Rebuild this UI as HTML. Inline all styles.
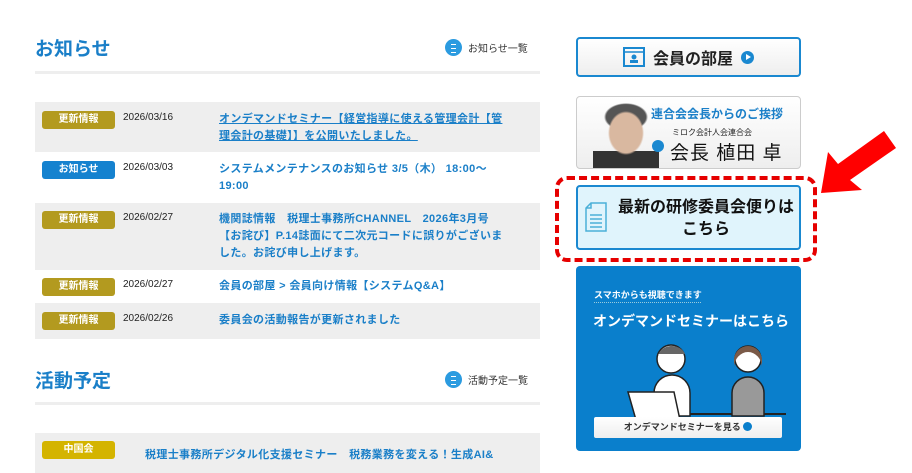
<!DOCTYPE html>
<html><head><meta charset="utf-8"><style>
*{margin:0;padding:0;box-sizing:border-box}
body{width:912px;height:465px;overflow:hidden;background:#fff;font-family:"Liberation Sans","Noto Sans CJK JP",sans-serif;position:relative}
.a{position:absolute}
h2{position:absolute;left:35px;font-size:19px;color:#1a7fc8;font-weight:bold}
.more{position:absolute;left:445px;font-size:10px;color:#333;display:flex;align-items:center;gap:6px}
.more i{width:17px;height:17px;border-radius:50%;background:#2b9be0;display:inline-block;position:relative}
.more i:after{content:"";position:absolute;left:6px;top:5px;width:5px;height:7px;border-top:1px solid #fff;border-bottom:1px solid #fff;background:linear-gradient(#fff,#fff) 0 3px/5px 1px no-repeat}
.line{position:absolute;left:35px;width:505px;height:3px;background:#eee}
.row{position:absolute;left:35px;width:505px}
.g{background:#eee}
.b{position:absolute;left:7px;width:73px;height:18px;border-radius:3px;color:#fff;font-size:10px;font-weight:bold;text-align:center;line-height:18px}
.y{background:#b39a1f}.bl{background:#1582cf}
.d{position:absolute;left:88px;font-size:10px;color:#222}
.t{position:absolute;left:184px;width:288px;font-size:11px;font-weight:bold;color:#1a7fc8;line-height:17px;letter-spacing:.35px}
</style></head><body>
<h2 style="top:34px">お知らせ</h2>
<div class="more" style="top:39px"><i></i>お知らせ一覧</div>
<div class="line" style="top:71px"></div>

<div class="row g" style="top:102px;height:50px"><div class="b y" style="top:9px">更新情報</div><div class="d" style="top:10px">2026/03/16</div><div class="t" style="top:9px;text-decoration:underline">オンデマンドセミナー【経営指導に使える管理会計【管理会計の基礎】】を公開いたしました。</div></div>
<div class="row" style="top:152px;height:51px"><div class="b bl" style="top:9px">お知らせ</div><div class="d" style="top:10px">2026/03/03</div><div class="t" style="top:9px">システムメンテナンスのお知らせ 3/5（木） 18:00〜19:00</div></div>
<div class="row g" style="top:203px;height:67px"><div class="b y" style="top:8px">更新情報</div><div class="d" style="top:9px">2026/02/27</div><div class="t" style="top:8px">機関誌情報　税理士事務所CHANNEL　2026年3月号【お詫び】P.14誌面にて二次元コードに誤りがございました。お詫び申し上げます。</div></div>
<div class="row" style="top:270px;height:33px"><div class="b y" style="top:8px">更新情報</div><div class="d" style="top:9px">2026/02/27</div><div class="t" style="top:8px">会員の部屋 &gt; 会員向け情報【システムQ&amp;A】</div></div>
<div class="row g" style="top:303px;height:36px"><div class="b y" style="top:9px">更新情報</div><div class="d" style="top:10px">2026/02/26</div><div class="t" style="top:9px">委員会の活動報告が更新されました</div></div>

<h2 style="top:366px">活動予定</h2>
<div class="more" style="top:371px"><i></i>活動予定一覧</div>
<div class="line" style="top:402px"></div>
<div class="row g" style="top:433px;height:40px"><div class="b" style="top:8px;background:#d4b400">中国会</div><div class="t" style="top:14px;left:110px;width:400px;white-space:nowrap">税理士事務所デジタル化支援セミナー　税務業務を変える！生成AI&amp;</div></div>

<!-- right -->
<div class="a" style="left:576px;top:37px;width:225px;height:40px;border:2px solid #1a88d0;border-radius:4px;background:linear-gradient(#fff,#eee);display:flex;align-items:center;justify-content:center;gap:8px;font-size:16px;font-weight:bold;color:#222">
<svg width="22" height="20" viewBox="0 0 22 20"><rect x="1" y="1" width="20" height="18" fill="none" stroke="#1a88d0" stroke-width="2"/><line x1="1" y1="5" x2="21" y2="5" stroke="#1a88d0" stroke-width="1.5"/><circle cx="11" cy="10" r="2.5" fill="#1a88d0"/><rect x="7" y="13" width="8" height="3" fill="#1a88d0"/></svg>会員の部屋<span style="width:13px;height:13px;border-radius:50%;background:#1a88d0;display:inline-block;position:relative"><span style="position:absolute;left:5px;top:3.5px;border-left:5px solid #fff;border-top:3px solid transparent;border-bottom:3px solid transparent"></span></span></div>

<div class="a" style="left:576px;top:96px;width:225px;height:73px;border:1px solid #ccc;border-radius:4px;background:linear-gradient(#fff,#eee);overflow:hidden">
<div class="a" style="left:16px;top:6px;width:66px;height:70px;background:radial-gradient(ellipse 18px 22px at 33px 30px,#d9b8a0 90%,transparent 100%),radial-gradient(ellipse 22px 14px at 33px 14px,#555 90%,transparent 100%),linear-gradient(transparent 48px,#333 48px);border-radius:3px"></div>
<div class="a" style="left:74px;top:8px;font-size:12px;color:#1a7fc8;font-weight:bold;white-space:nowrap">連合会会長からのご挨拶</div>
<div class="a" style="left:95px;top:30px;font-size:8px;color:#222;white-space:nowrap">ミロク会計人会連合会</div>
<div class="a" style="left:75px;top:43px;width:12px;height:12px;border-radius:50%;background:#1a88d0"></div>
<div class="a" style="left:93px;top:41px;font-size:19px;color:#111;letter-spacing:1px;white-space:nowrap">会長 植田 卓</div>
</div>

<div class="a" style="left:555px;top:176px;width:262px;height:86px;border:4px dashed #e60000;border-radius:12px"></div>
<div class="a" style="left:576px;top:185px;width:225px;height:65px;border:2px solid #1a88d0;border-radius:4px;background:#e0f4fc">
<svg class="a" style="left:7px;top:15px" width="22" height="30" viewBox="0 0 22 30"><path d="M6 1H21V29H1V6Z M6 1V6H1" fill="none" stroke="#4ab0d8" stroke-width="1.5"/><path d="M5 13H17M5 17H17M5 21H17M5 25H17" stroke="#4ab0d8" stroke-width="1.5"/></svg>
<div class="a" style="left:33px;top:10px;width:190px;font-size:16px;font-weight:bold;color:#111;line-height:22px;text-align:center">最新の研修委員会便りは<br>こちら</div></div>

<svg class="a" style="left:818px;top:130px" width="80" height="66" viewBox="0 0 80 66"><path d="M3 63L10 22L20 34L66 1L78 18L32 50L44 60Z" fill="#f00"/></svg>

<div class="a" style="left:576px;top:266px;width:225px;height:185px;background:#0a7fcc;border-radius:4px;color:#fff">
<div class="a" style="left:18px;top:22px;font-size:9px;font-weight:bold">スマホからも視聴できます</div>
<div class="a" style="left:18px;top:36px;width:107px;border-top:1px dotted #9cd"></div>
<div class="a" style="left:17px;top:45px;font-size:14px;font-weight:bold;white-space:nowrap">オンデマンドセミナーはこちら</div>
<svg class="a" style="left:30px;top:72px" width="190" height="85" viewBox="0 0 190 85"><line x1="30" y1="76" x2="180" y2="76" stroke="#222" stroke-width="2"/><circle cx="65" cy="21" r="14" fill="#fff" stroke="#222" stroke-width="1.5"/><path d="M52 18a14 12 0 0 1 27 -2 H52Z" fill="#666"/><path d="M48 78V55a18 18 0 0 1 36 0V78Z" fill="#fff" stroke="#222" stroke-width="1.5"/><path d="M22 54L68 54L74 82L30 82Z" fill="#fff" stroke="#222" stroke-width="1.5"/><circle cx="142" cy="21" r="13" fill="#fff" stroke="#222" stroke-width="1.5"/><path d="M128 30a14 16 0 0 1 28 0V22a14 14 0 0 0 -28 0Z" fill="#7a5a48"/><path d="M126 78V55a16 16 0 0 1 32 0V78Z" fill="#999" stroke="#222" stroke-width="1.5"/></svg>
<div class="a" style="left:18px;top:151px;width:188px;height:21px;background:linear-gradient(#fff,#eee);border-radius:2px;color:#333;font-size:9px;font-weight:bold;text-align:center;line-height:21px">オンデマンドセミナーを見る <span style="display:inline-block;width:9px;height:9px;border-radius:50%;background:#0a7fcc;vertical-align:-1px"></span></div>
</div>
</body></html>
